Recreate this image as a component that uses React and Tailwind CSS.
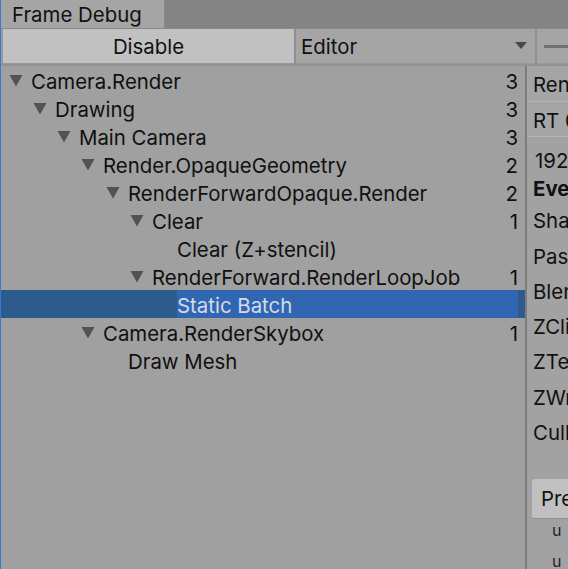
import React from 'react';

const rows = [
  { label: 'Camera.Render', level: 0, arrow: true, count: 3 },
  { label: 'Drawing', level: 1, arrow: true, count: 3 },
  { label: 'Main Camera', level: 2, arrow: true, count: 3 },
  { label: 'Render.OpaqueGeometry', level: 3, arrow: true, count: 2 },
  { label: 'RenderForwardOpaque.Render', level: 4, arrow: true, count: 2 },
  { label: 'Clear', level: 5, arrow: true, count: 1 },
  { label: 'Clear (Z+stencil)', level: 6 },
  { label: 'RenderForward.RenderLoopJob', level: 5, arrow: true, count: 1 },
  { label: 'Static Batch', level: 6, selected: true },
  { label: 'Camera.RenderSkybox', level: 3, arrow: true, count: 1 },
  { label: 'Draw Mesh', level: 4 },
];

// indent per level, written out so tailwind picks them up
const indent = ['pl-[8px]', 'pl-[32px]', 'pl-[56px]', 'pl-[80px]', 'pl-[105px]', 'pl-[129px]', 'pl-[154px]'];

function Triangle() {
  return (
    <svg width="14" height="13" viewBox="0 0 14 13" className="shrink-0">
      <path d="M0.5 1 L13.5 1 L7 12.5 Z" fill="#525252" />
    </svg>
  );
}

function TreeRow({ row }) {
  return (
    <div className={`flex items-center h-[28px] shrink-0 pr-[7px] ${indent[row.level]} ${row.selected ? 'bg-[#2d5b8d]' : ''}`}>
      {row.arrow ? <Triangle /> : <div className="w-[14px] shrink-0" />}
      <div className={`ml-[8px] flex-1 h-full flex items-center pt-[4px] ${row.selected ? 'bg-[#3167b2] text-[#d3dbe9]' : 'text-[#101010]'}`}>
        {row.label}
      </div>
      {row.count && <div className="text-[#101010] pt-[4px]">{row.count}</div>}
    </div>
  );
}

export default function App() {
  return (
    <div className="w-[568px] h-[569px] overflow-hidden flex flex-col bg-[#a0a0a0] border-l border-[#3a7bd0] font-['Inter',sans-serif] text-[20.4px] leading-none">
      {/* tab strip */}
      <div className="h-[28px] flex bg-[#848484] shrink-0">
        <div className="w-[164px] bg-[#a5a5a5] flex items-center pl-[11px] pt-[2px] text-[#111] border-r border-[#8a8a8a]">
          Frame Debug
        </div>
      </div>

      {/* toolbar */}
      <div className="h-[38px] flex bg-[#999999] border-t border-[#8a8a8a] border-b-2 border-b-[#929292] shrink-0">
        <div className="w-[2px]" />
        <button className="w-[291px] h-[34px] bg-[#c1c1c1] text-[#111] flex items-center justify-center pt-[2px]">
          Disable
        </button>
        <div className="w-[2px] bg-[#8f8f8f]" />
        <div className="w-[239px] h-[34px] bg-[#a5a5a5] flex items-center pl-[5px] pr-[8px] text-[#111]">
          <span className="flex-1 pt-[2px]">Editor</span>
          <svg width="12" height="8" viewBox="0 0 12 8">
            <path d="M0 0 L12 0 L6 7 Z" fill="#484848" />
          </svg>
        </div>
        <div className="w-[2px] bg-[#8f8f8f]" />
        <div className="flex-1 h-[34px] bg-[#a5a5a5] flex items-center pl-[7px]">
          <div className="h-[3px] w-full bg-[#6f6f6f]" />
        </div>
      </div>

      <div className="flex flex-1 min-h-0">
        {/* event tree */}
        <div className="w-[524px] shrink-0 bg-[#a0a0a0] flex flex-col">
          {rows.map((r) => (
            <TreeRow key={r.label} row={r} />
          ))}
        </div>
        <div className="w-[2px] bg-[#7c7c7c] shrink-0" />

        {/* details panel */}
        <div className="flex-1 bg-[#a2a2a2] flex flex-col whitespace-nowrap overflow-hidden text-[#111]">
          <div className="h-[36px] shrink-0 bg-[#a5a5a5] border-b border-[#b4b4b4] flex items-center pl-[6px] pt-[4px]">Render</div>
          <div className="h-[35px] shrink-0 bg-[#a5a5a5] border-b border-[#b4b4b4] flex items-center pl-[6px] pt-[4px]">RT 0</div>
          <div className="flex flex-col shrink-0 pl-[6px]">
            <div className="h-[28px] mt-[10px] flex items-center pl-[2px]">1920</div>
            <div className="h-[29px] flex items-center font-bold">Event</div>
            <div className="h-[35.25px] flex items-center">Shader</div>
            <div className="h-[35.25px] flex items-center">Pass</div>
            <div className="h-[35.25px] flex items-center">Blend</div>
            <div className="h-[35.25px] flex items-center">ZClip</div>
            <div className="h-[35.25px] flex items-center">ZTest</div>
            <div className="h-[35.25px] flex items-center">ZWrite</div>
            <div className="h-[35.25px] flex items-center">Cull</div>
          </div>
          <div className="mt-[28px] ml-[5px] h-[40px] shrink-0 bg-[#c0c0c0] rounded-l-[3px] border-b border-[#8e8e8e] flex items-center pl-[9px] pt-[2px]">
            Preview
          </div>
          <div className="pl-[25px] text-[16px] shrink-0 flex flex-col text-[#222]">
            <span className="h-[22px] flex items-center">u</span>
            <span className="h-[40px] flex items-center">u</span>
          </div>
        </div>
      </div>
    </div>
  );
}
